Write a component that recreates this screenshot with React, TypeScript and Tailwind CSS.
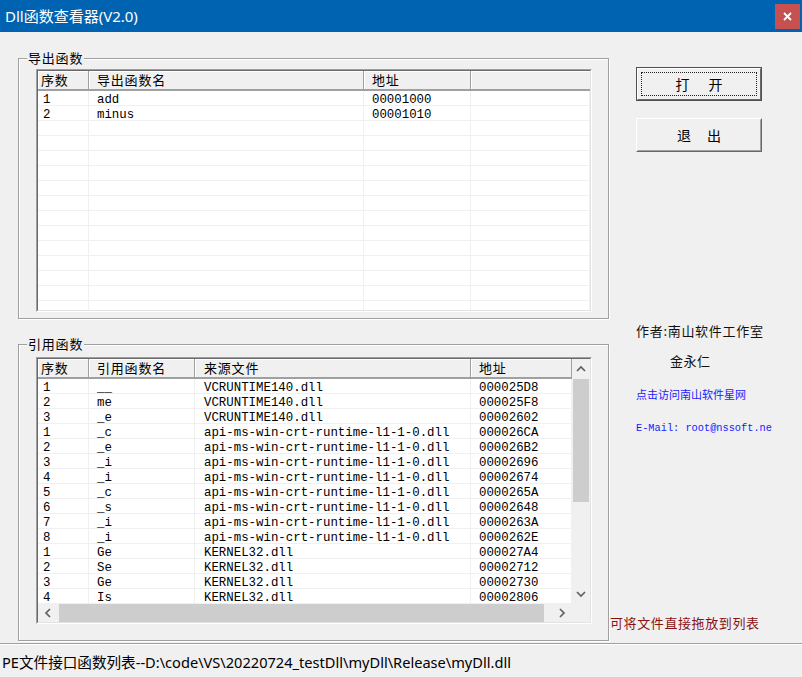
import React from "react";

type Dir = "up" | "down" | "left" | "right";

function Chevron({ dir }: { dir: Dir }) {
  const vert = dir === "up" || dir === "down";
  const d = {
    up: "M1 6 L5 2 L9 6",
    down: "M1 2 L5 6 L9 2",
    left: "M6 1 L2 5 L6 9",
    right: "M2 1 L6 5 L2 9",
  }[dir];
  const w = vert ? 10 : 8;
  const h = vert ? 8 : 10;
  return (
    <svg width={w} height={h} viewBox={`0 0 ${w} ${h}`}>
      <path d={d} fill="none" stroke="#606060" strokeWidth="1.7" />
    </svg>
  );
}

const list1Cols = ["w-[51px] pl-[5px]", "w-[275px] pl-[8px]", "w-[107px] pl-[8px]", "w-[119px] pl-[8px]"];
const list1Head = ["w-[51px] pl-[3px]", "w-[275px] pl-[8px]", "w-[107px] pl-[8px]"];
const list1Rows: string[][] = [
  ["1", "add", "00001000", ""],
  ["2", "minus", "00001010", ""],
  ...Array.from({ length: 13 }, () => ["", "", "", ""]),
];

const list2Cols = ["w-[51px] pl-[5px]", "w-[106px] pl-[8px]", "w-[276px] pl-[9px]", "w-[101px] pl-[8px]"];
const list2Head = ["w-[51px] pl-[3px]", "w-[106px] pl-[8px]", "w-[276px] pl-[9px]", "w-[101px] pl-[8px]"];
const API = "api-ms-win-crt-runtime-l1-1-0.dll";
const list2Rows: string[][] = [
  ["1", "__", "VCRUNTIME140.dll", "000025D8"],
  ["2", "me", "VCRUNTIME140.dll", "000025F8"],
  ["3", "_e", "VCRUNTIME140.dll", "00002602"],
  ["1", "_c", API, "000026CA"],
  ["2", "_e", API, "000026B2"],
  ["3", "_i", API, "00002696"],
  ["4", "_i", API, "00002674"],
  ["5", "_c", API, "0000265A"],
  ["6", "_s", API, "00002648"],
  ["7", "_i", API, "0000263A"],
  ["8", "_i", API, "0000262E"],
  ["1", "Ge", "KERNEL32.dll", "000027A4"],
  ["2", "Se", "KERNEL32.dll", "00002712"],
  ["3", "Ge", "KERNEL32.dll", "00002730"],
  ["4", "Is", "KERNEL32.dll", "00002806"],
];

function Header({ cols, labels }: { cols: string[]; labels: string[] }) {
  return (
    <div className="flex h-[20px] shrink-0 bg-[#f0f0f0] border-b-2 border-[#a0a0a0] font-['Noto_Sans_CJK_SC',sans-serif] text-[13px] tracking-[0.8px] text-black">
      {labels.map((l, i) => (
        <div
          key={i}
          className={`${cols[i]} shrink-0 flex items-center border-r border-[#a0a0a0] shadow-[inset_1px_1px_0_#fff] leading-[16px]`}
        >
          {l}
        </div>
      ))}
      <div className="flex-1 shadow-[inset_1px_1px_0_#fff]" />
    </div>
  );
}

function Rows({ cols, rows }: { cols: string[]; rows: string[][] }) {
  return (
    <div className="flex flex-col bg-white font-['Liberation_Mono',monospace] text-[12.4px] text-black">
      {rows.map((r, i) => (
        <div key={i} className="flex h-[15px] shrink-0 border-b border-[#f0f0f0]">
          {r.map((c, j) => (
            <div key={j} className={`${cols[j]} shrink-0 pt-[2px] leading-[14px] whitespace-nowrap border-r border-[#f0f0f0]`}>
              {c}
            </div>
          ))}
        </div>
      ))}
    </div>
  );
}

function Sunken({ className, children }: { className: string; children: React.ReactNode }) {
  return (
    <div className={`${className} border border-t-[#a0a0a0] border-l-[#a0a0a0] border-r-white border-b-white`}>
      <div className="w-full h-full border border-t-[#696969] border-l-[#696969] border-r-[#e3e3e3] border-b-[#e3e3e3] overflow-hidden bg-white flex flex-col">
        {children}
      </div>
    </div>
  );
}

function List1() {
  return (
    <Sunken className="w-[556px] h-[243px]">
      <Header cols={list1Head} labels={["序数", "导出函数名", "地址"]} />
      <Rows cols={list1Cols} rows={list1Rows} />
    </Sunken>
  );
}

function List2() {
  return (
    <Sunken className="w-[556px] h-[267px]">
      <div className="flex h-[245px] shrink-0">
        <div className="w-[534px] flex flex-col overflow-hidden">
          <Header cols={list2Head} labels={["序数", "引用函数名", "来源文件", "地址"]} />
          <Rows cols={list2Cols} rows={list2Rows} />
        </div>
        <div className="w-[18px] bg-[#f0f0f0] flex flex-col">
          <div className="h-[20px] flex items-center justify-center">
            <Chevron dir="up" />
          </div>
          <div className="h-[123px] mx-[1px] bg-[#cdcdcd]" />
          <div className="flex-1" />
          <div className="h-[20px] flex items-center justify-center">
            <Chevron dir="down" />
          </div>
        </div>
      </div>
      <div className="flex h-[18px] shrink-0 bg-[#f0f0f0]">
        <div className="w-[534px] flex">
          <div className="w-[20px] flex items-center justify-center">
            <Chevron dir="left" />
          </div>
          <div className="w-[485px] ml-[1px] bg-[#cdcdcd]" />
          <div className="flex-1" />
          <div className="w-[20px] flex items-center justify-center">
            <Chevron dir="right" />
          </div>
        </div>
        <div className="flex-1" />
      </div>
    </Sunken>
  );
}

function Group({ title, className, children }: { title: string; className: string; children: React.ReactNode }) {
  return (
    <div className={`relative w-[591px] border border-[#a0a0a0] shadow-[inset_1px_1px_0_#fff,1px_1px_0_#fff] pl-[17px] ${className}`}>
      <span className="absolute left-[8px] -top-[9px] bg-[#f0f0f0] px-[1px] text-[13px] leading-[16px] tracking-[0.8px] font-['Noto_Sans_CJK_SC',sans-serif] text-black">
        {title}
      </span>
      {children}
    </div>
  );
}

export default function App() {
  return (
    <div className="w-[802px] h-[677px] bg-[#f0f0f0] flex flex-col overflow-hidden">
      <div className="h-8 shrink-0 bg-[#0063b1] flex items-start justify-between">
        <div className="pl-[5px] pt-[6px] text-white text-[15px] leading-[20px] font-['Noto_Sans','Noto_Sans_CJK_SC',sans-serif]">
          Dll函数查看器(V2.0)
        </div>
        <div className="mt-[4px] mr-[2px] w-[25px] h-[25px] bg-[#c75050] flex items-center justify-center">
          <svg width="9" height="9" viewBox="0 0 9 9">
            <path d="M1 1 L8 8 M8 1 L1 8" stroke="#fff" strokeWidth="1.8" />
          </svg>
        </div>
      </div>

      <div className="h-[611px] shrink-0 flex">
        <div className="pl-[18px] pt-[26px] flex flex-col">
          <Group title="导出函数" className="h-[261px] pt-[10px]">
            <List1 />
          </Group>
          <Group title="引用函数" className="mt-[25px] h-[297px] pt-[12px]">
            <List2 />
          </Group>
        </div>

        <div className="flex flex-col items-start font-['Noto_Sans_CJK_SC',sans-serif]">
          <div className="ml-[27px] mt-[35px] w-[126px] h-[34px] border border-[#505050] bg-[#f0f0f0]">
            <div className="w-full h-full border border-t-white border-l-white border-r-[#696969] border-b-[#696969] p-[3px]">
              <div className="w-full h-full border border-dotted border-[#202020] flex items-center justify-center gap-[19px] text-[14px] leading-[16px] text-black">
                <span>打</span>
                <span>开</span>
              </div>
            </div>
          </div>
          <div className="ml-[27px] mt-[17px] w-[126px] h-[34px] border border-t-white border-l-white border-r-[#696969] border-b-[#696969] bg-[#f0f0f0]">
            <div className="w-full h-full border border-t-[#f0f0f0] border-l-[#f0f0f0] border-r-[#a0a0a0] border-b-[#a0a0a0] flex items-center justify-center gap-[16px] text-[14px] leading-[16px] text-black">
              <span>退</span>
              <span>出</span>
            </div>
          </div>

          <div className="ml-[27px] mt-[171px] text-[13px] leading-[16px] tracking-[0.7px] text-[#111]">作者:南山软件工作室</div>
          <div className="ml-[61px] mt-[14px] text-[13px] leading-[16px] tracking-[0.5px] text-[#111]">金永仁</div>
          <div className="ml-[27px] mt-[18px] text-[11px] leading-[14px] text-[#1a1aff]">点击访问南山软件星网</div>
          <div className="ml-[27px] mt-[20px] text-[10.3px] leading-[14px] text-[#1a1aff] font-['Liberation_Mono',monospace] whitespace-nowrap">
            E-Mail: root@nssoft.ne
          </div>
          <div className="ml-[1px] mt-[180px] text-[13px] leading-[16px] tracking-[0.6px] text-[#8b1010] whitespace-nowrap">可将文件直接拖放到列表</div>
        </div>
      </div>

      <div className="flex-1 border-t border-[#a0a0a0] shadow-[inset_0_1px_0_#fff] flex items-center pl-[2px] pt-[2px]">
        <span className="text-[14.6px] leading-[20px] text-black font-['Noto_Sans','Noto_Sans_CJK_SC',sans-serif] whitespace-nowrap">
          PE文件接口函数列表--D:\code\VS\20220724_testDll\myDll\Release\myDll.dll
        </span>
      </div>
    </div>
  );
}
